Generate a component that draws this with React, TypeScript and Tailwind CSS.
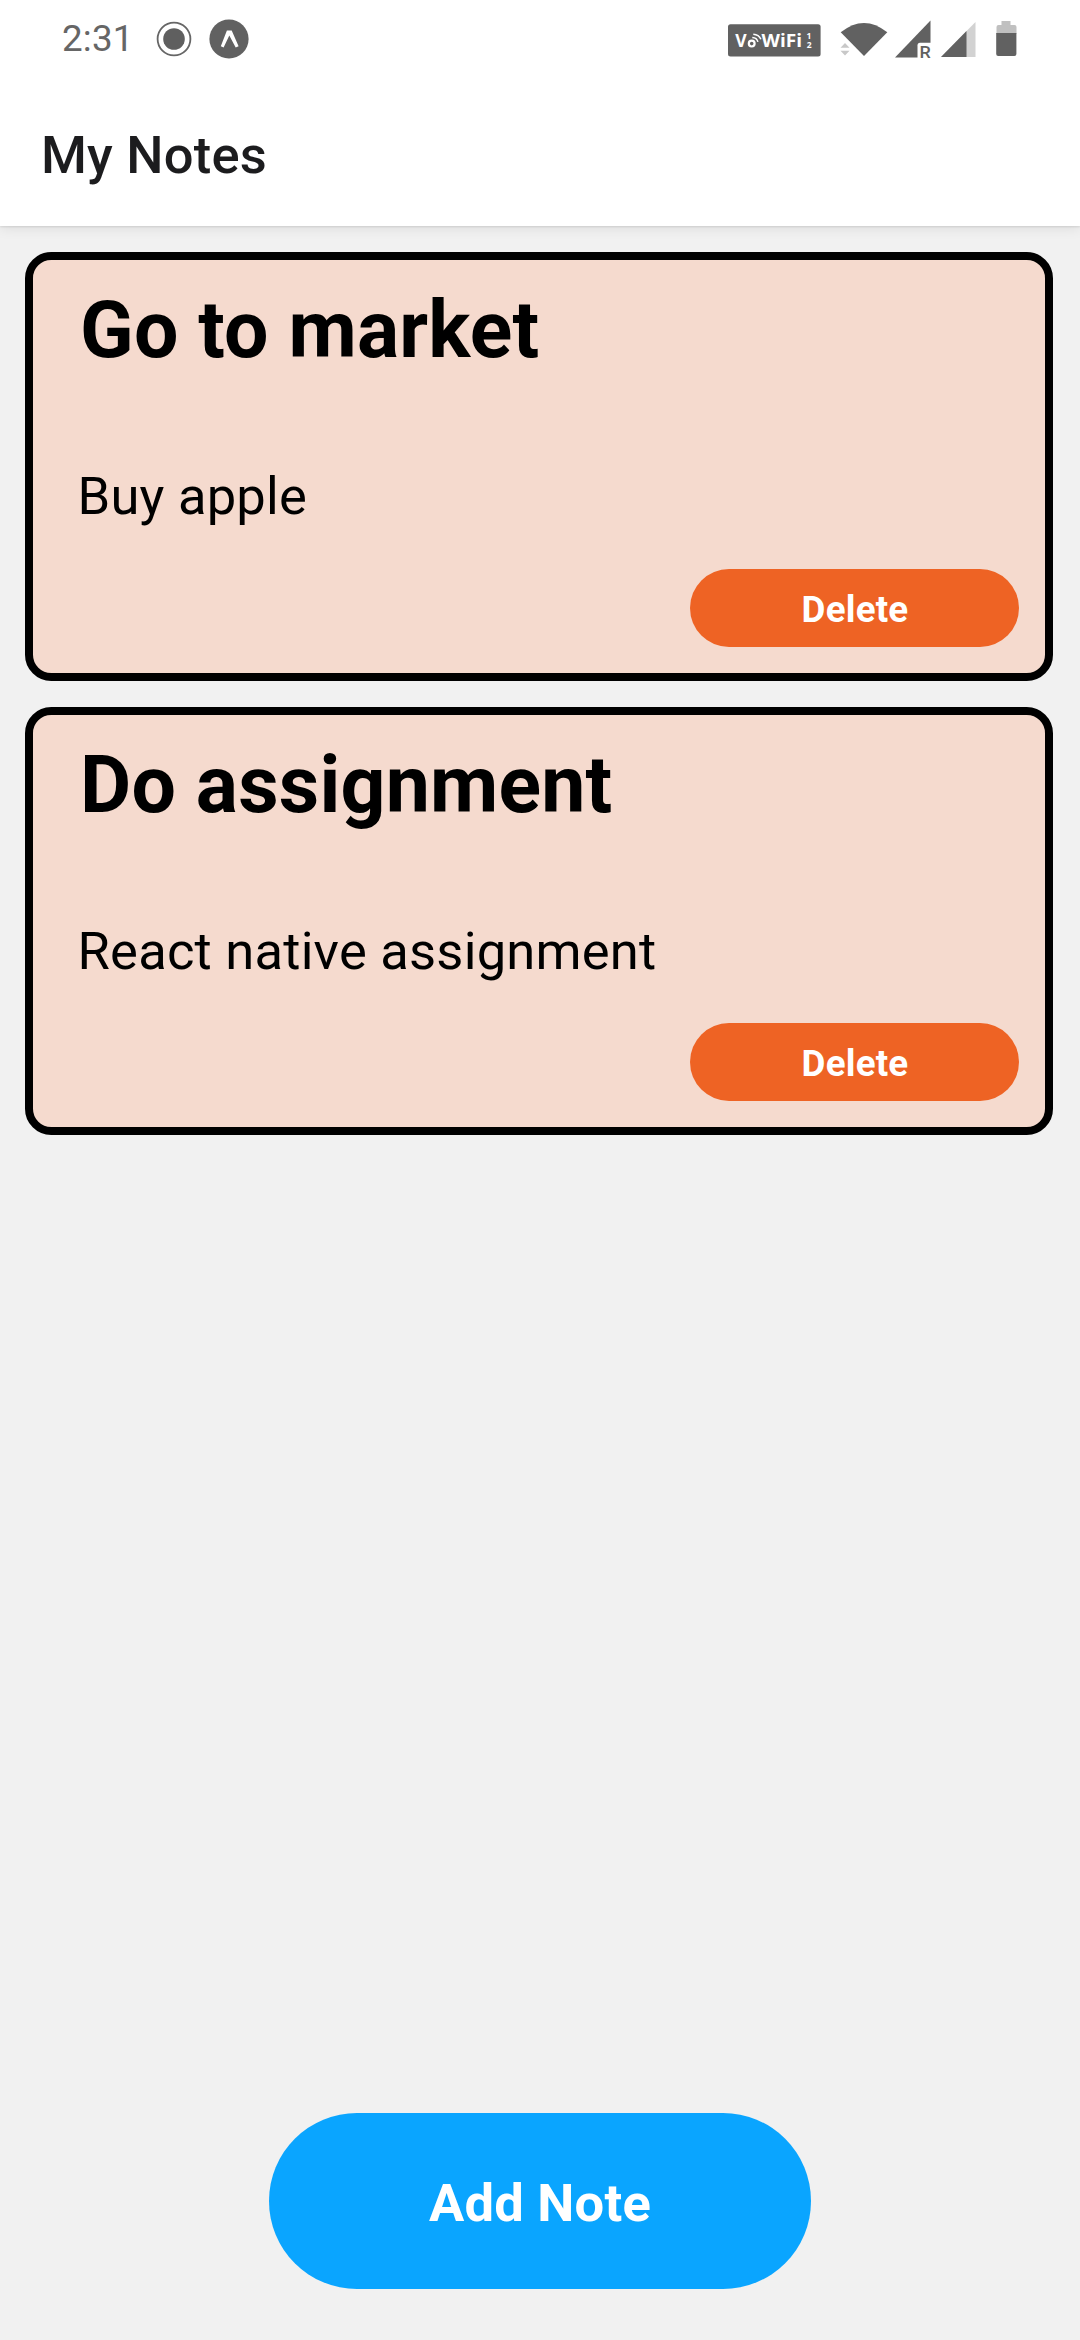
const notes = [
  { title: "Go to market", body: "Buy apple" },
  { title: "Do assignment", body: "React native assignment" },
];

function StatusBar() {
  return (
    <div className="flex h-[80px] items-start justify-between pl-[62px] pr-[62px]">
      <div className="flex h-[77px] items-center">
        <span className="w-[94px] text-[36.75px] leading-[43px] tracking-[0.2px] text-[#666]">2:31</span>
        <svg className="block" width="36" height="36" viewBox="0 0 36 36">
          <circle cx="18" cy="18" r="16.4" fill="none" stroke="#666" strokeWidth="1.8" />
          <circle cx="18" cy="18" r="10.8" fill="#5f5f5f" />
        </svg>
        <svg className="ml-[17px] block" width="40" height="40" viewBox="0 0 40 40">
          <circle cx="20" cy="20" r="19.6" fill="#616161" />
          <path d="M11.8 27.2 17.9 11.4h4.8L29.6 27.2l-2.9 1.4L20.3 16.4l-5.7 12.2z" fill="#fff" />
        </svg>
      </div>
      <svg className="block" width="291" height="80" viewBox="727 0 291 80">
        <rect x="728" y="24.3" width="92.6" height="32.2" rx="2.5" fill="#616161" />
        <g fill="#fff" fontFamily="Open Sans, sans-serif" fontWeight="700">
          <text x="735.3" y="46.9" fontSize="17.5">V</text>
          <circle cx="751.7" cy="43.6" r="2.9" fill="none" stroke="#fff" strokeWidth="2.2" />
          <path d="M752.3 37.4q4.6.2 5.6 4.4M753.3 34.2q5.6.4 7.6 5" fill="none" stroke="#fff" strokeWidth="1.5" />
          <text x="761.5" y="46.9" fontSize="17.5" textLength="40.5" lengthAdjust="spacingAndGlyphs">WiFi</text>
          <text x="806.6" y="39.4" fontSize="8.5">1</text>
          <text x="806.8" y="47.9" fontSize="8.5">2</text>
        </g>
        <path d="M840.7 32.3Q864 13.5 887.3 32.3L864 56z" fill="#616161" />
        <path d="M840.5 47.7h9l-4.5-4.8zM840.5 50.7h9l-4.5 4.8z" fill="#c8c8c8" />
        <path d="M930.5 20.5V57.6H895z" fill="#616161" />
        <path d="M917.5 58V45.2q0-2.5 2.5-2.5h11V58z" fill="#fff" />
        <text x="919.6" y="57.6" fontSize="17" fontFamily="Roboto, sans-serif" fontWeight="500" fill="#616161" textLength="11.3" lengthAdjust="spacingAndGlyphs">R</text>
        <path d="M975.5 22V57H941z" fill="#d2d2d2" />
        <path d="M966.5 31V57H941z" fill="#616161" />
        <path d="M1001.5 21h9v4h4q2 0 2 2v7h-20v-7q0-2 2-2h3z" fill="#c0c0c0" />
        <path d="M996.2 33h20.2v21q0 2-2 2h-16.2q-2 0-2-2z" fill="#616161" />
      </svg>
    </div>
  );
}

function NoteCard({ title, body }: { title: string; body: string }) {
  return (
    <article className="flex h-[428.5px] flex-col rounded-[26.25px] border-8 border-black bg-[#f5dace] pr-[26px] text-black">
      <h2 className="mt-[24px] ml-[47px] text-[78.75px] leading-[92px] font-bold tracking-[0.2px]">{title}</h2>
      <p className="mt-[89px] ml-[44.5px] text-[52.5px] leading-[62px] tracking-[0.22px]">{body}</p>
      <button className="mt-[41.5px] h-[78px] w-[329px] self-end rounded-full bg-[#ee6324] pt-[3px] pl-[1px] text-[36.75px] leading-[43px] font-bold tracking-[0.2px] text-white">
        Delete
      </button>
    </article>
  );
}

export default function App() {
  return (
    <div className="flex h-[2340px] w-[1080px] flex-col overflow-hidden bg-[#f1f1f1] font-['Roboto',sans-serif]">
      <header className="h-[226px] bg-white shadow-[0_1px_2px_rgba(0,0,0,0.1),0_3px_12px_rgba(0,0,0,0.08)]">
        <StatusBar />
        <h1 className="mt-[44px] ml-[41px] text-[52.5px] leading-[62px] font-medium tracking-[0.2px] text-[#1c1c1e]">My Notes</h1>
      </header>
      <main className="flex flex-1 flex-col gap-[26px] pt-[26px] pr-[27px] pl-[25px]">
        {notes.map((note) => (
          <NoteCard key={note.title} title={note.title} body={note.body} />
        ))}
      </main>
      <footer className="flex justify-center pb-[51px]">
        <button className="h-[176.3px] w-[541.6px] rounded-full bg-[#0aa5ff] pt-[4px] text-[52.5px] leading-[62px] font-bold tracking-[0.25px] text-white">
          Add Note
        </button>
      </footer>
    </div>
  );
}
